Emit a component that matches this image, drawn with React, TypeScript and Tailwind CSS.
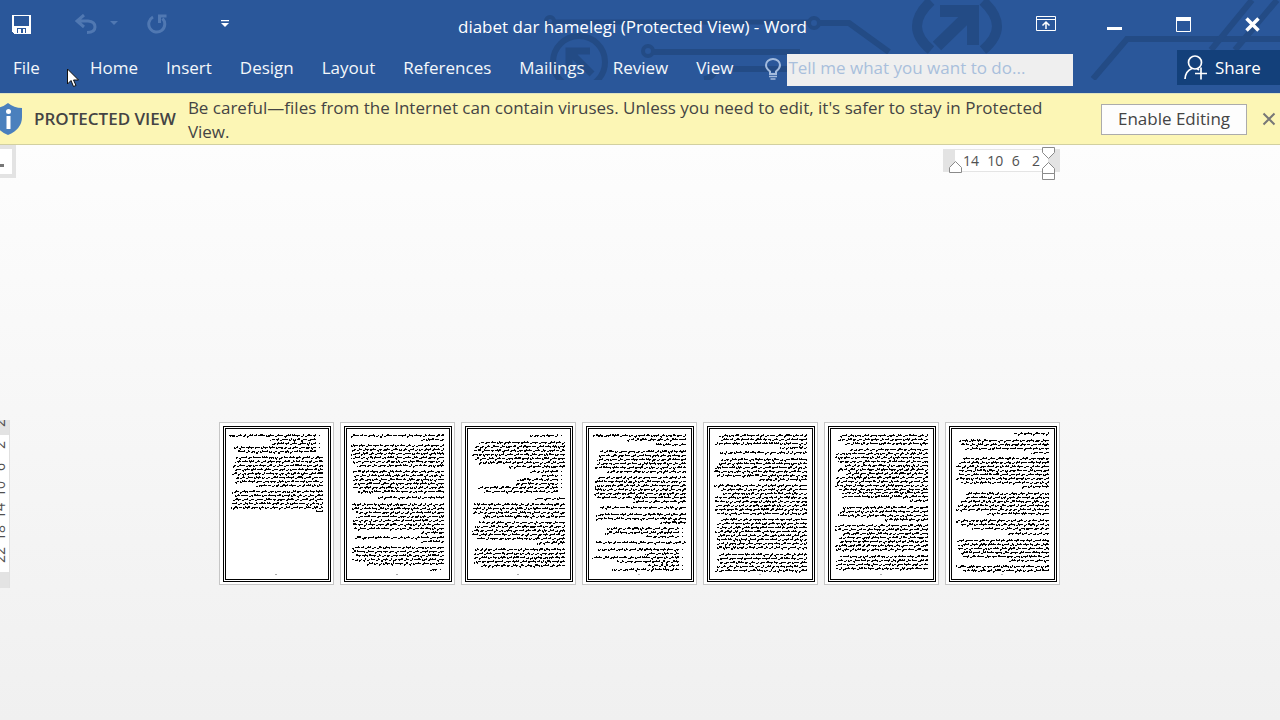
import type { ReactNode } from "react";

type Block = {
  y: number;
  lefts: number[];
  right?: number;
  bullets?: number[];
};

const LINE = 3.95;

const tabs = ["Home", "Insert", "Design", "Layout", "References", "Mailings", "Review", "View"];

const verticalMarks = ["2", "2", "6", "10", "14", "18", "22"];

// each block is a paragraph: first line y, then the left end of every line
const pages: Block[][] = [
  [
    { y: 14, right: 97, lefts: [10, 51, 52, 15, 19], bullets: [0, 2, 3] },
    { y: 36, lefts: [17, 16, 14, 15, 13, 17, 16, 37] },
    { y: 70, lefts: [13, 16, 13, 13, 12, 96] },
  ],
  [
    { y: 14, lefts: [11, 81] },
    { y: 24, lefts: [11, 12, 11, 11, 13, 17] },
    { y: 50, lefts: [13, 13, 13, 14, 13, 18] },
    { y: 76, lefts: [38] },
    { y: 83, lefts: [12, 12, 16, 16, 13, 13, 14, 81] },
    { y: 116, lefts: [15, 81] },
    { y: 126, lefts: [12, 12, 16, 12, 27] },
    { y: 148, right: 97, lefts: [90], bullets: [0] },
  ],
  [
    { y: 14, right: 97, lefts: [69], bullets: [0] },
    { y: 21, lefts: [18, 14, 13, 11, 14, 18, 47] },
    { y: 50, right: 97, lefts: [69, 80, 56, 54, 16, 23], bullets: [0, 1, 2, 3, 4] },
    { y: 77, lefts: [74] },
    { y: 83, lefts: [13, 11, 12, 22] },
    { y: 101, lefts: [18, 14, 11, 11, 15, 76] },
    { y: 128, lefts: [14, 13, 13, 13, 20] },
  ],
  [
    { y: 14, lefts: [11, 44] },
    { y: 23, lefts: [74] },
    { y: 30, lefts: [17, 17, 15, 15, 13, 25] },
    { y: 56, lefts: [16, 13, 13, 13, 12, 15, 51] },
    { y: 86, lefts: [17] },
    { y: 93, lefts: [14, 13, 78] },
    { y: 107, right: 97, lefts: [25, 23, 64], bullets: [0, 1, 2] },
    { y: 121, lefts: [13] },
    { y: 128, right: 97, lefts: [15, 63, 10, 35, 65, 30], bullets: [0, 2, 4, 5] },
  ],
  [
    { y: 14, lefts: [16, 18, 12, 77] },
    { y: 31, lefts: [17] },
    { y: 38, lefts: [18, 16, 12, 11, 14, 56] },
    { y: 64, lefts: [11, 18, 20, 12, 12, 12, 12, 14] },
    { y: 98, lefts: [18, 14, 14, 12, 14, 14, 14, 14] },
    { y: 133, lefts: [16, 14, 17, 14, 12] },
  ],
  [
    { y: 14, lefts: [15, 14, 21] },
    { y: 28, lefts: [26, 12, 11, 14, 20, 14, 22, 12, 13, 11, 14, 18, 18, 86] },
    { y: 86, lefts: [19, 15, 14, 61] },
    { y: 104, lefts: [11, 11, 18, 14, 16, 11, 11] },
    { y: 135, lefts: [16, 12, 12, 12] },
  ],
  [
    { y: 12, lefts: [69] },
    { y: 19, lefts: [14, 16, 20, 86] },
    { y: 37, lefts: [17, 14, 11, 13, 14, 11, 16, 77] },
    { y: 72, lefts: [21, 21, 16, 13, 11, 42] },
    { y: 99, lefts: [11, 16, 27] },
    { y: 112, lefts: [62] },
    { y: 119, lefts: [11, 13, 13, 15, 18, 63] },
    { y: 145, lefts: [11, 18] },
  ],
];

// small seeded generator so the thumbnails are the same on every render
function makeRandom(seed: number) {
  let s = seed;
  return () => {
    s = (s * 16807) % 2147483647;
    return s / 2147483647;
  };
}

function thumbnailPath(blocks: Block[], seed: number) {
  const rand = makeRandom(seed);
  const dot = (x: number, y: number) => `M${x} ${y}h1v1h-1z`;
  let d = "";

  blocks.forEach((block) => {
    const right = block.right ?? 104;
    block.lefts.forEach((left, i) => {
      const y = Math.round(block.y + i * LINE) - 1;
      if (block.bullets?.includes(i)) d += dot(100, y);

      let x = right;
      while (x > left) {
        const word = Math.min(3 + Math.floor(rand() * 6), x - left);
        const lean = rand() < 0.7;
        for (let k = 0; k < word; k++) {
          const r = rand();
          const px = x - k - 1;
          // most words drop by a pixel at their left end
          const row = lean && k > word - 3 ? y + 1 : y;
          d += dot(px, row);
          if (r < 0.25) d += dot(px, row - 1);
          else if (r > 0.88) d += dot(px, row + 1);
        }
        x -= word + 1;
      }
    });
  });

  return d;
}

function PageThumbnail({ blocks, index }: { blocks: Block[]; index: number }) {
  return (
    <div className="border border-[#c6c6c6] bg-white">
      <svg width="113" height="161" viewBox="1 1 113 161" shapeRendering="crispEdges" aria-hidden="true">
        <rect x="4.5" y="4.5" width="107" height="155" fill="none" stroke="#000" />
        <rect x="6.5" y="6.5" width="103" height="151" fill="none" stroke="#000" />
        <path d={thumbnailPath(blocks, 1117 * (index + 3))} fill="#000" />
        <path d="M56 152h2" stroke="#aaa" />
      </svg>
    </div>
  );
}

function HeaderArt() {
  return (
    <svg
      className="absolute top-0 right-0"
      width="740"
      height="80"
      viewBox="540 0 740 80"
      fill="none"
      stroke="#234b85"
      strokeWidth="6"
      aria-hidden="true"
    >
      <circle cx="550" cy="21" r="4" strokeWidth="4" />
      <path d="M555 22H808" strokeWidth="5" />
      <circle cx="814" cy="23" r="5" strokeWidth="4" />
      <path d="M819 23H849L889 52" />
      <circle cx="579" cy="62" r="26" />
      <path d="M569 71V51H590M569 51L592 74" strokeWidth="7" />
      <circle cx="648" cy="51" r="5" strokeWidth="4" />
      <path d="M653 52H800" />
      <path d="M733 69H787M704 79Q711 78 714 73" />
      <path d="M931 1Q903 27 931 50" strokeWidth="10" />
      <path d="M983 1Q1011 27 983 50" strokeWidth="10" />
      <path d="M940 11H973V45M972 12L937 46" strokeWidth="12" />
      <path d="M1093 79L1127 39H1280" />
      <path d="M1252 0L1211 50M1277 0L1235 50" />
    </svg>
  );
}

function IconButton({ label, className, children }: { label: string; className?: string; children: ReactNode }) {
  return (
    <button type="button" aria-label={label} className={`flex items-center justify-center ${className ?? ""}`}>
      {children}
    </button>
  );
}

function TitleBar() {
  return (
    <div className="relative flex h-12 items-center text-white">
      <div className="flex items-center pl-3">
        <IconButton label="Save">
          <svg width="19" height="19" viewBox="0 0 19 19" fill="none" shapeRendering="crispEdges">
            <path d="M0 0h19v19h-17l-2-2z" fill="#fff" />
            <path d="M2 1h15v10h-15z" fill="#2a579a" />
            <path d="M5 13h9v5h-9z" fill="#2a579a" />
            <path d="M6 14h3v4h-3zM11 14h2v4h-2z" fill="#fff" />
          </svg>
        </IconButton>
        <IconButton label="Undo" className="ml-11">
          <svg width="22" height="20" viewBox="0 0 22 20" fill="none" stroke="#5078b2" strokeWidth="3">
            <path d="M9 1L2 7L9 13M2 7H13Q20 7.500 20 13Q20 18.500 12 18.500" />
          </svg>
        </IconButton>
        <IconButton label="Undo history" className="ml-3">
          <svg width="10" height="6" viewBox="0 0 10 6">
            <path d="M1 0h8l-4 4z" fill="#5078b2" />
          </svg>
        </IconButton>
        <IconButton label="Repeat" className="ml-7">
          <svg width="20" height="20" viewBox="0 0 20 20" fill="none" stroke="#5078b2" strokeWidth="3">
            <path d="M6 3A8 8 0 1 0 15.500 4.500" />
            <path d="M19.500 2H12.500V9" />
          </svg>
        </IconButton>
        <IconButton label="Customize Quick Access Toolbar" className="ml-[54px]">
          <svg width="8" height="8" viewBox="0 0 8 8" fill="#fff">
            <path d="M0 0h8v1.300h-8zM0 3h8l-4 4z" />
          </svg>
        </IconButton>
      </div>

      <h1 className="flex-1 pt-1.5 text-center text-[17px] leading-6">diabet dar hamelegi (Protected View) - Word</h1>

      <div className="flex items-center pr-5">
        <IconButton label="Ribbon Display Options">
          <svg width="20" height="16" viewBox="0 0 20 16" fill="none" stroke="#fff">
            <path d="M.5 .5h19v14h-19zM0 3.500h20" />
            <path d="M10 13V6M6.500 9.500L10 6L13.500 9.500" strokeWidth="1.500" />
          </svg>
        </IconButton>
        <IconButton label="Minimize" className="ml-[51px]">
          <svg width="15" height="15" viewBox="0 0 15 15">
            <path d="M0 10h15v3h-15z" fill="#fff" />
          </svg>
        </IconButton>
        <IconButton label="Maximize" className="ml-[54px]">
          <svg width="15" height="15" viewBox="0 0 15 15" fill="none" stroke="#fff">
            <path d="M.5 .5h14v14h-14z" />
            <path d="M0 2h15" strokeWidth="4" />
          </svg>
        </IconButton>
        <IconButton label="Close" className="ml-[54px]">
          <svg width="15" height="15" viewBox="0 0 15 15" stroke="#fff" strokeWidth="3.500">
            <path d="M1.500 1.500L13.500 13.500M13.500 1.500L1.500 13.500" />
          </svg>
        </IconButton>
      </div>
    </div>
  );
}

function RibbonTabs() {
  return (
    <div className="relative flex h-[45px] items-start text-[17px] text-[#f4f7fb]">
      <nav className="flex pt-2 leading-6">
        <button type="button" className="pr-9 pl-[13px]">
          File
        </button>
        {tabs.map((tab) => (
          <button key={tab} type="button" className="px-3.5">
            {tab}
          </button>
        ))}
      </nav>

      <div className="ml-[18px] flex pt-1.5">
        <label htmlFor="tell-me" aria-label="Tell me what you want to do" className="mr-1.5 pt-1">
          <svg width="16" height="22" viewBox="0 0 16 22" fill="none" stroke="#a3bbdd" strokeWidth="2">
            <path d="M5 16V13.500Q1 10.500 1 7A7 6 0 0 1 15 7Q15 10.500 11 13.500V16z" />
            <path d="M4 18.500H12M5.500 21H10.500" strokeWidth="1.500" />
          </svg>
        </label>
        <input
          id="tell-me"
          type="text"
          placeholder="Tell me what you want to do..."
          className="h-8 w-[286px] bg-[#efefef] px-px pb-1.5 text-[#444] outline-none placeholder:text-[#a9bfdc]"
        />
      </div>

      <button type="button" className="mt-0.5 ml-auto flex h-[35px] w-[103px] items-center gap-2 bg-[#13407a] pl-[7px] text-white">
        <svg width="23" height="25" viewBox="0 0 23 25" fill="none" stroke="#fff" strokeWidth="1.700">
          <circle cx="11" cy="7.500" r="6.500" />
          <path d="M1 24Q1.500 16 8 13.500M13 13.500L15 15M11 18.500H23M17 12.500V24.500" />
        </svg>
        Share
      </button>
    </div>
  );
}

function MessageBar() {
  return (
    <div role="alert" className="flex h-[52px] items-center border-y border-t-[#dfe3c0] border-b-[#d2d0a0] bg-[#fcf6b5] text-[17px] text-[#444]">
      <svg className="-ml-1.5 shrink-0" width="28" height="32" viewBox="0 0 28 32">
        <path d="M14 0Q20 5 28 5V14Q28 26 14 32Q0 26 0 14V5Q8 5 14 0z" fill="#4a80bd" />
        <circle cx="14.500" cy="8.500" r="2.500" fill="#fff" />
        <path d="M12.500 13h4v13h-4z" fill="#fff" />
      </svg>
      <strong className="ml-3 shrink-0 font-semibold">PROTECTED VIEW</strong>
      <p className="mr-8 ml-3 flex-1 pt-0.5 leading-6">
        Be careful—files from the Internet can contain viruses. Unless you need to edit, it's safer to stay in Protected View.
      </p>
      <button type="button" className="h-[31px] w-[146px] shrink-0 border border-[#ababab] bg-[#fdfdfd]">
        Enable Editing
      </button>
      <button type="button" aria-label="Close message" className="mr-1 ml-[15px]">
        <svg width="14" height="14" viewBox="0 0 14 14" stroke="#777" strokeWidth="2">
          <path d="M1.500 1.500L12.500 12.500M12.500 1.500L1.500 12.500" />
        </svg>
      </button>
    </div>
  );
}

function HorizontalRuler() {
  return (
    <div className="relative mt-1 flex h-[23px] w-[117px] border-y border-[#e4e4e4] text-[14px] leading-[22px] text-[#505050]">
      <span className="w-3 bg-[#e3e3e3]"></span>
      <div className="flex flex-1 justify-between bg-white px-2">
        <span>14</span>
        <span>10</span>
        <span>6</span>
        <span className="pl-1">2</span>
      </div>
      <span className="w-3 bg-[#e3e3e3]"></span>
      <svg className="absolute -top-1 left-0" width="117" height="34" viewBox="0 0 117 34" fill="#fff" stroke="#8a8a8a">
        <path d="M6.500 26.500v-5l6-6l6 6v5z" />
        <path d="M99.500 1.500h12v5l-6 6l-6-6z" />
        <path d="M99.500 27.500v-5l6-6l6 6v5zM99.500 27.500h12v6h-12z" />
      </svg>
    </div>
  );
}

function VerticalRuler() {
  return (
    <div className="absolute top-0 left-0 flex h-[168px] w-2.5 flex-col overflow-hidden border-r border-[#e0e0e0] bg-white">
      <span className="h-[15px] bg-[#e3e3e3]"></span>
      <span className="flex-1"></span>
      <span className="h-4 bg-[#e3e3e3]"></span>
      <div className="absolute -top-2 right-0 text-[14px] leading-[18px] text-[#505050]">
        {verticalMarks.map((mark, i) => (
          <div key={i} className="flex h-[22px] rotate-180 items-center justify-center [writing-mode:vertical-rl]">
            {mark}
          </div>
        ))}
      </div>
    </div>
  );
}

export default function App() {
  return (
    <div className="relative flex min-h-screen flex-col overflow-hidden font-['Open_Sans','Noto_Sans',sans-serif]">
      <header className="relative bg-[#2a579a]">
        <HeaderArt />
        <TitleBar />
        <RibbonTabs />
      </header>

      <MessageBar />

      <main className="flex-1 bg-linear-to-b from-[#fdfdfd] to-[#f0f0f0] pr-px">
        <div className="relative flex justify-center">
          <button
            type="button"
            aria-label="Tab selector"
            className="absolute top-0 left-0 h-[33px] w-4 border-y-4 border-r-4 border-[#e3e3e3] bg-white"
          >
            <span className="mt-2 block h-[3px] w-1 bg-[#777]"></span>
          </button>
          <div className="flex w-[841px] justify-end">
            <HorizontalRuler />
          </div>
        </div>

        <div className="relative mt-[248px] flex justify-center gap-1.5 pt-0.5">
          <VerticalRuler />
          {pages.map((blocks, i) => (
            <PageThumbnail key={i} blocks={blocks} index={i} />
          ))}
        </div>
      </main>

      {/* Mouse pointer */}
      <svg className="absolute top-[68px] left-[67px]" width="13" height="20" viewBox="0 0 13 20" aria-hidden="true">
        <path d="M.5 1v15l3.500-3.500l2.500 6l2.500-1l-2.500-5.500h5z" fill="#fff" stroke="#111" />
      </svg>
    </div>
  );
}
